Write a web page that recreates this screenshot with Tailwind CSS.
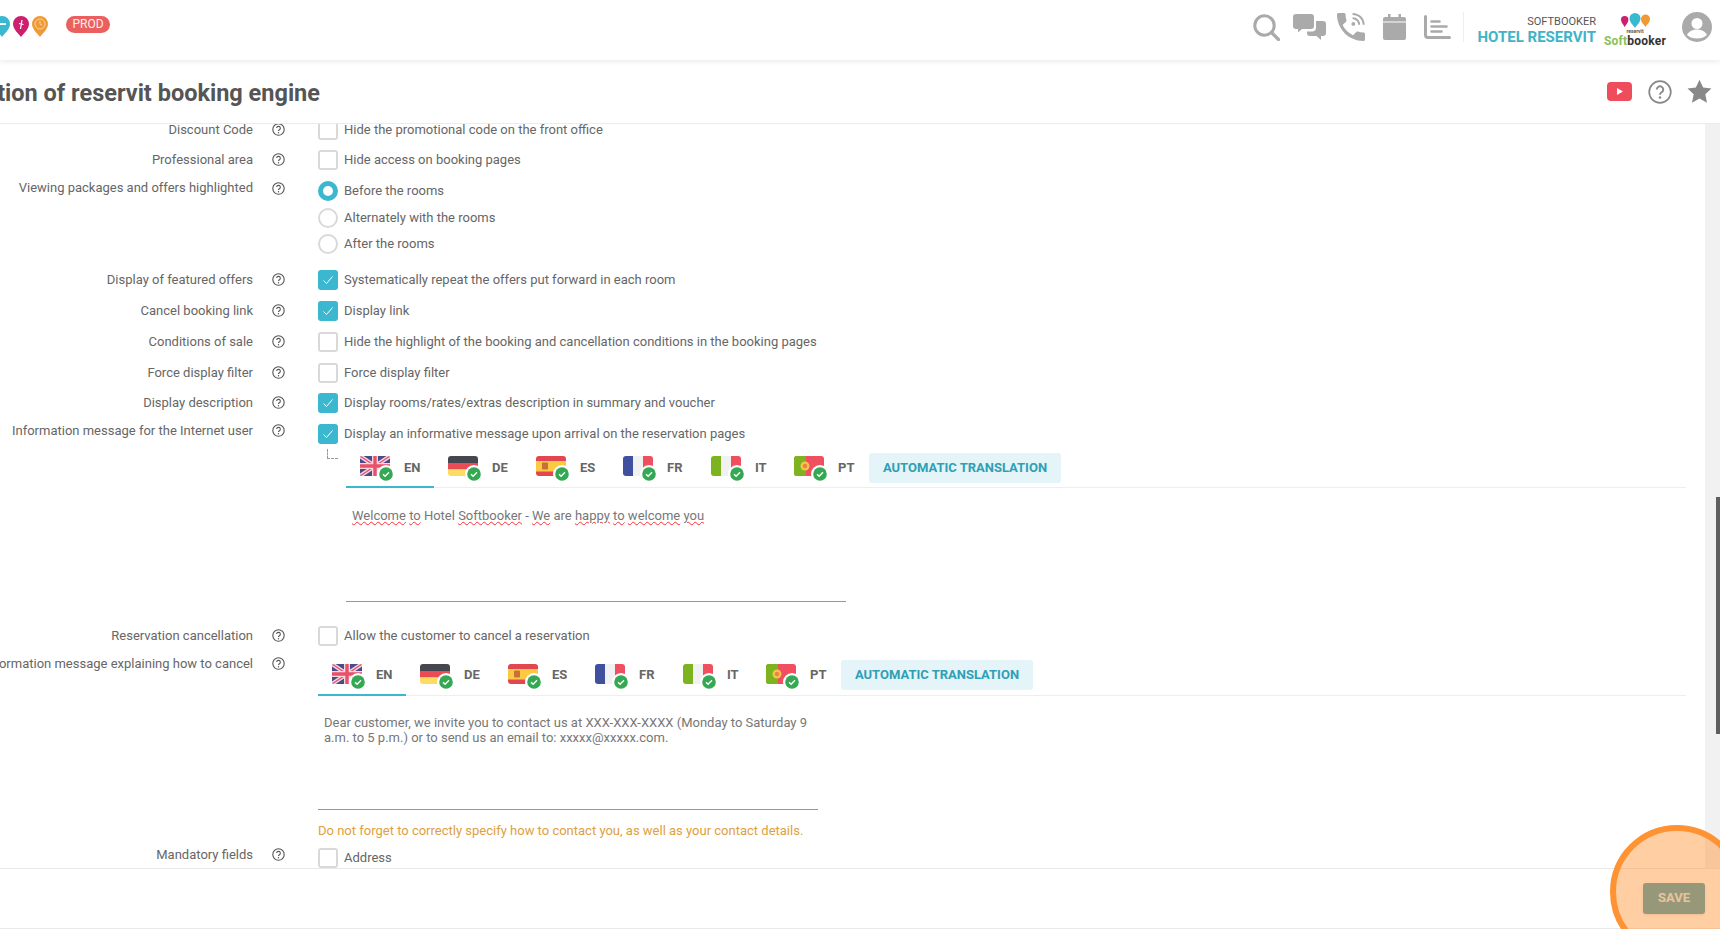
<!DOCTYPE html>
<html lang="en">
<head>
    <meta charset="UTF-8">
    <title>Configuration of reservit booking engine</title>
    <script src="https://cdn.jsdelivr.net/npm/@tailwindcss/browser@4"></script>
</head>
<body class="relative h-[929px] overflow-hidden bg-white font-['Roboto',sans-serif] text-[13px] text-[#666]">
    <!-- Shared icons -->
    <svg class="hidden">
        <symbol id="help" viewBox="0 0 13 13">
            <circle cx="6.5" cy="6.5" r="5.7" fill="none" stroke="#555" stroke-width="1.1"/>
            <path d="M4.7 5.1a1.8 1.8 0 1 1 2.7 1.6c-.6.35-.9.7-.9 1.3" fill="none" stroke="#555" stroke-width="1.1"/>
            <circle cx="6.5" cy="9.7" r=".7" fill="#555"/>
        </symbol>
        <symbol id="tick" viewBox="0 0 20 20">
            <path d="M5.5 10.5l3 3 6-7" fill="none" stroke="#fff" stroke-width="1"/>
        </symbol>
        <symbol id="badge" viewBox="0 0 18 18">
            <circle cx="9" cy="9" r="9" fill="#fff"/>
            <circle cx="9" cy="9" r="6.8" fill="#35a853"/>
            <path d="M6 9.2l2.1 2 3.9-4" fill="none" stroke="#fff" stroke-width="1.4"/>
        </symbol>
        <symbol id="flag-en" viewBox="0 0 30 20">
            <rect width="30" height="20" fill="#4a4a8c"/>
            <path d="M0 0l30 20M30 0L0 20" stroke="#f3d9de" stroke-width="4"/>
            <path d="M0 0l30 20M30 0L0 20" stroke="#e9506a" stroke-width="1.3"/>
            <path d="M15 0v20M0 10h30" stroke="#f3d9de" stroke-width="6"/>
            <path d="M15 0v20M0 10h30" stroke="#e9506a" stroke-width="3.4"/>
        </symbol>
        <symbol id="flag-de" viewBox="0 0 30 20">
            <rect width="30" height="7" fill="#464650"/>
            <rect y="7" width="30" height="6.5" fill="#ea4c55"/>
            <rect y="13.5" width="30" height="6.5" fill="#fddc62"/>
        </symbol>
        <symbol id="flag-es" viewBox="0 0 30 20">
            <rect width="30" height="20" fill="#e2474f"/>
            <rect y="5" width="30" height="10.5" fill="#fcc943"/>
            <rect x="6" y="6.5" width="6" height="7" rx="1" fill="#c9703a"/>
        </symbol>
        <symbol id="flag-fr" viewBox="0 0 30 20">
            <rect width="10" height="20" fill="#40509e"/>
            <rect x="10" width="10" height="20" fill="#f1f1f1"/>
            <rect x="20" width="10" height="20" fill="#ef4f5f"/>
        </symbol>
        <symbol id="flag-it" viewBox="0 0 30 20">
            <rect width="10" height="20" fill="#7db31e"/>
            <rect x="10" width="10" height="20" fill="#f1f1f1"/>
            <rect x="20" width="10" height="20" fill="#ef4f5f"/>
        </symbol>
        <symbol id="flag-pt" viewBox="0 0 30 20">
            <rect width="30" height="20" fill="#ef4f5f"/>
            <rect width="12" height="20" fill="#7db31e"/>
            <circle cx="11" cy="10" r="4.5" fill="#f4c44d"/>
            <circle cx="11" cy="10" r="2.2" fill="#e8843f"/>
        </symbol>
    </svg>

    <!-- Top bar -->
    <header class="relative z-10 flex h-[60px] items-center justify-between bg-white shadow-[0_1px_6px_rgba(0,0,0,0.1)]">
        <div class="flex items-center">
            <div class="-ml-[6px] flex gap-[3px] pb-[7px]">
                <svg class="h-[21px] w-[16px]" viewBox="0 0 16 21"><path d="M8 21C5 17 0 13 0 8a8 8 0 0 1 16 0c0 5-5 9-8 13z" fill="#39b8cf"/><path d="M4 8h8" stroke="#fff" stroke-width="2"/></svg>
                <svg class="h-[21px] w-[16px]" viewBox="0 0 16 21"><path d="M8 21C5 17 0 13 0 8a8 8 0 0 1 16 0c0 5-5 9-8 13z" fill="#cc1f6e"/><path d="M9 4L7.5 13M6 7.5l4.5 1" stroke="#fff" stroke-width="1.2" fill="none"/></svg>
                <svg class="h-[21px] w-[16px]" viewBox="0 0 16 21"><path d="M8 21C5 17 0 13 0 8a8 8 0 0 1 16 0c0 5-5 9-8 13z" fill="#f09a37"/><circle cx="8" cy="8" r="5" fill="none" stroke="#fbd9a8" stroke-width=".9"/><path d="M8 5v3.2l2.2 1" fill="none" stroke="#fbd9a8" stroke-width=".9"/></svg>
            </div>
            <span class="mb-[12px] ml-[18px] flex h-[17px] w-[44px] items-center justify-center rounded-full bg-[#e9605f] text-[12px] text-white/90">PROD</span>
        </div>
        <div class="flex items-center pb-[6px]">
            <svg class="h-[27px] w-[27px]" viewBox="0 0 27 27"><circle cx="11.5" cy="11.5" r="9.7" fill="none" stroke="#aaa" stroke-width="3"/><path d="M18.5 18.5l7 7" stroke="#aaa" stroke-width="3.2" stroke-linecap="round"/></svg>
            <svg class="ml-[13px] h-[27px] w-[33px]" viewBox="0 0 33 27" fill="#aaa"><path d="M3 0h15a3 3 0 0 1 3 3v9a3 3 0 0 1-3 3H9l-4 3.5V15H3a3 3 0 0 1-3-3V3a3 3 0 0 1 3-3z"/><path d="M23 7h7a3 3 0 0 1 3 3v9a3 3 0 0 1-3 3h-2v4l-4.500-4H17a3 3 0 0 1-3-3v-1.500h5a4 4 0 0 0 4-4V7z"/></svg>
            <svg class="ml-[11px] h-[28px] w-[28px]" viewBox="3 3 18 18" fill="#aaa"><path d="M20 15.500c-1.250 0-2.450-.2-3.570-.57-.35-.11-.74-.03-1.020.24l-2.200 2.200c-2.830-1.440-5.150-3.750-6.590-6.590l2.200-2.210c.28-.26.36-.65.25-1C8.700 6.450 8.500 5.250 8.500 4c0-.55-.45-1-1-1H4c-.55 0-1 .45-1 1 0 9.390 7.610 17 17 17 .55 0 1-.45 1-1v-3.500c0-.55-.45-1-1-1z"/><path d="M19.500 10.500h1.300c0-4.300-3.500-7.500-7.800-7.500v1.300c3.600 0 6.500 2.600 6.500 6.200zm-2.900 0h1.300c0-2.700-2.200-4.800-4.900-4.800V7c2 0 3.600 1.500 3.600 3.500z"/><circle cx="13.500" cy="10" r="1.200"/></svg>
            <svg class="ml-[18px] h-[26px] w-[23px]" viewBox="0 0 23 26" fill="#aaa"><path d="M2 3h3V0h2.500v3h8V0H18v3h3a2 2 0 0 1 2 2v2.500H0V5a2 2 0 0 1 2-2z"/><path d="M0 8.500h23V24a2 2 0 0 1-2 2H2a2 2 0 0 1-2-2z"/></svg>
            <svg class="ml-[18px] h-[24px] w-[27px]" viewBox="0 0 27 24" fill="none" stroke="#aaa" stroke-linecap="round"><path d="M1.500 1.500V20a2.500 2.500 0 0 0 2.500 2.500h21.500" stroke-width="3"/><path d="M7.500 6.500h8M7.500 11.500h15M7.500 16.500h10" stroke-width="2.600"/></svg>
            <div class="ml-[12px] h-[30px] w-px bg-[#eee]"></div>
            <div class="ml-[13px] mt-[7px] flex w-[119px] flex-col items-end whitespace-nowrap leading-none">
                <span class="text-[11px] text-[#555]">SOFTBOOKER</span>
                <span class="mt-[3px] text-[15px] font-bold text-[#40b4c6]">HOTEL RESERVIT</span>
            </div>
            <div class="ml-[9px] mt-[5px] flex w-[60px] flex-col items-center">
                <svg class="h-[15px] w-[29px]" viewBox="0 0 29 15">
                    <path d="M3.700 14C2.500 11.500 0 9.500 0 6.700a3.700 3.700 0 0 1 7.400 0C7.400 9.500 5 11.500 3.700 14z" fill="#cc1f6e"/>
                    <path d="M14 15C12 12 8.500 9 8.500 5.500a5.500 5.500 0 0 1 11 0C19.500 9 16 12 14 15z" fill="#39b8cf"/>
                    <path d="M24.500 14c-1.500-2.500-4.500-4.500-4.500-8a4.500 4.500 0 0 1 9 0c0 3.500-3 5.500-4.500 8z" fill="#f09a37"/>
                </svg>
                <span class="text-[5px] font-bold leading-[7px] text-[#555]">reservit</span>
                <span class="text-[12px] font-bold leading-[12px] tracking-[0.2px] text-[#333]"><span class="text-[#8cc152]">Soft</span>booker</span>
            </div>
            <svg class="ml-[17px] mr-[8px] h-[30px] w-[30px]" viewBox="0 0 30 30"><circle cx="15" cy="15" r="15" fill="#aaa"/><circle cx="15" cy="11.500" r="5.500" fill="#fff"/><path d="M5 23c2-4 6-5.500 10-5.500S23 19 25 23c-2.500 2.500-6 3.500-10 3.500S7.500 25.500 5 23z" fill="#fff"/></svg>
        </div>
    </header>

    <!-- Title bar -->
    <div class="relative z-[5] flex h-[64px] items-center justify-between border-b border-[#ececec] bg-white">
        <div class="mt-[4px] flex w-[320px] justify-end whitespace-nowrap text-[23.500px] font-bold text-[#555]">Configuration of reservit booking engine</div>
        <div class="flex items-center">
            <svg class="h-[19px] w-[25px]" viewBox="0 0 25 19"><rect width="25" height="19" rx="4" fill="#ef4c5c"/><path d="M10 6v7l6-3.500z" fill="#fff"/></svg>
            <svg class="ml-[16px] h-[24px] w-[24px]" viewBox="0 0 24 24"><circle cx="12" cy="12" r="10.800" fill="none" stroke="#888" stroke-width="1.700"/><path d="M8.800 9.500a3.200 3.200 0 1 1 4.800 2.800c-1 .6-1.600 1.200-1.600 2.400" fill="none" stroke="#888" stroke-width="1.900"/><circle cx="12" cy="17.500" r="1.200" fill="#888"/></svg>
            <svg class="ml-[15px] mr-[8px] h-[25px] w-[25px]" viewBox="0 0 24 24"><path d="M12 .8l3.500 7.400 8 1-5.900 5.500 1.600 8L12 18.700l-7.200 4 1.600-8L.5 9.200l8-1z" fill="#888"/></svg>
        </div>
    </div>

    <!-- Settings form -->
    <main class="flex h-[744px] overflow-hidden">
        <div class="-mt-[8px] flex-1">
            <div class="flex h-[30px]">
                <div class="mt-1 flex h-5 w-[285px] items-center justify-end whitespace-nowrap">Discount Code<svg class="mb-[2px] ml-[19px] h-[13px] w-[13px] shrink-0"><use href="#help"/></svg></div>
                <label class="ml-[33px] mt-1 flex items-center gap-1.5 self-start"><span class="h-5 w-5 rounded-[3px] border-2 border-[#d9d9d9]"></span>Hide the promotional code on the front office</label>
            </div>
            <div class="flex h-[30px]">
                <div class="mt-1 flex h-5 w-[285px] items-center justify-end whitespace-nowrap">Professional area<svg class="mb-[2px] ml-[19px] h-[13px] w-[13px] shrink-0"><use href="#help"/></svg></div>
                <label class="ml-[33px] mt-1 flex items-center gap-1.5 self-start"><span class="h-5 w-5 rounded-[3px] border-2 border-[#d9d9d9]"></span>Hide access on booking pages</label>
            </div>
            <div class="flex h-[90px]">
                <div class="mt-[2px] flex h-5 w-[285px] items-center justify-end whitespace-nowrap">Viewing packages and offers highlighted<svg class="ml-[19px] h-[13px] w-[13px] shrink-0"><use href="#help"/></svg></div>
                <div class="ml-[33px] mt-[5px] flex flex-col gap-[6.500px]">
                    <label class="flex items-center gap-1.5"><span class="h-5 w-5 rounded-full border-[5px] border-[#3bb8cf]"></span>Before the rooms</label>
                    <label class="flex items-center gap-1.5"><span class="h-5 w-5 rounded-full border-2 border-[#d9d9d9]"></span>Alternately with the rooms</label>
                    <label class="flex items-center gap-1.5"><span class="h-5 w-5 rounded-full border-2 border-[#d9d9d9]"></span>After the rooms</label>
                </div>
            </div>
            <div class="flex h-[31px]">
                <div class="mt-1 flex h-5 w-[285px] items-center justify-end whitespace-nowrap">Display of featured offers<svg class="mb-[2px] ml-[19px] h-[13px] w-[13px] shrink-0"><use href="#help"/></svg></div>
                <label class="ml-[33px] mt-1 flex items-center gap-1.5 self-start"><span class="h-5 w-5 rounded-[3px] bg-[#3bb8cf]"><svg class="h-5 w-5"><use href="#tick"/></svg></span>Systematically repeat the offers put forward in each room</label>
            </div>
            <div class="flex h-[31px]">
                <div class="mt-1 flex h-5 w-[285px] items-center justify-end whitespace-nowrap">Cancel booking link<svg class="mb-[2px] ml-[19px] h-[13px] w-[13px] shrink-0"><use href="#help"/></svg></div>
                <label class="ml-[33px] mt-1 flex items-center gap-1.5 self-start"><span class="h-5 w-5 rounded-[3px] bg-[#3bb8cf]"><svg class="h-5 w-5"><use href="#tick"/></svg></span>Display link</label>
            </div>
            <div class="flex h-[31px]">
                <div class="mt-1 flex h-5 w-[285px] items-center justify-end whitespace-nowrap">Conditions of sale<svg class="mb-[2px] ml-[19px] h-[13px] w-[13px] shrink-0"><use href="#help"/></svg></div>
                <label class="ml-[33px] mt-1 flex items-center gap-1.5 self-start"><span class="h-5 w-5 rounded-[3px] border-2 border-[#d9d9d9]"></span>Hide the highlight of the booking and cancellation conditions in the booking pages</label>
            </div>
            <div class="flex h-[30px]">
                <div class="mt-1 flex h-5 w-[285px] items-center justify-end whitespace-nowrap">Force display filter<svg class="mb-[2px] ml-[19px] h-[13px] w-[13px] shrink-0"><use href="#help"/></svg></div>
                <label class="ml-[33px] mt-1 flex items-center gap-1.5 self-start"><span class="h-5 w-5 rounded-[3px] border-2 border-[#d9d9d9]"></span>Force display filter</label>
            </div>
            <div class="flex h-[30px]">
                <div class="mt-1 flex h-5 w-[285px] items-center justify-end whitespace-nowrap">Display description<svg class="mb-[2px] ml-[19px] h-[13px] w-[13px] shrink-0"><use href="#help"/></svg></div>
                <label class="ml-[33px] mt-1 flex items-center gap-1.5 self-start"><span class="h-5 w-5 rounded-[3px] bg-[#3bb8cf]"><svg class="h-5 w-5"><use href="#tick"/></svg></span>Display rooms/rates/extras description in summary and voucher</label>
            </div>

            <!-- Information message -->
            <div class="flex h-[203px]">
                <div class="mt-[2px] flex h-5 w-[285px] items-center justify-end whitespace-nowrap">Information message for the Internet user<svg class="mb-[2px] ml-[19px] h-[13px] w-[13px] shrink-0"><use href="#help"/></svg></div>
                <div class="relative ml-[33px] mt-[5px] flex-1">
                    <label class="flex items-center gap-1.5"><span class="h-5 w-5 rounded-[3px] bg-[#3bb8cf]"><svg class="h-5 w-5"><use href="#tick"/></svg></span>Display an informative message upon arrival on the reservation pages</label>
                    <div class="absolute left-[9px] top-[25px] h-[10px] w-[11px] border-b border-l border-dashed border-[#999]"></div>
                    <div class="ml-[28px] mt-[5px]">
                        <div class="flex h-[39px] w-[1340px] border-b border-[#eee] font-bold">
                            <div class="flex h-[39px] w-[88px] gap-[14px] border-b-2 border-[#3bb8cf] pl-[14px] pt-[7px]"><span class="relative h-5 w-[30px]"><svg class="h-5 w-[30px] rounded-[2px]"><use href="#flag-en"/></svg><svg class="absolute -right-[5px] top-[9px] h-[18px] w-[18px]"><use href="#badge"/></svg></span><span class="mt-[2px] leading-5">EN</span></div>
                            <div class="flex w-[88px] gap-[14px] pl-[14px] pt-[7px]"><span class="relative h-5 w-[30px]"><svg class="h-5 w-[30px] rounded-[3px]"><use href="#flag-de"/></svg><svg class="absolute -right-[5px] top-[9px] h-[18px] w-[18px]"><use href="#badge"/></svg></span><span class="mt-[2px] leading-5">DE</span></div>
                            <div class="flex w-[87px] gap-[14px] pl-[14px] pt-[7px]"><span class="relative h-5 w-[30px]"><svg class="h-5 w-[30px] rounded-[3px]"><use href="#flag-es"/></svg><svg class="absolute -right-[5px] top-[9px] h-[18px] w-[18px]"><use href="#badge"/></svg></span><span class="mt-[2px] leading-5">ES</span></div>
                            <div class="flex w-[88px] gap-[14px] pl-[14px] pt-[7px]"><span class="relative h-5 w-[30px]"><svg class="h-5 w-[30px] rounded-[3px]"><use href="#flag-fr"/></svg><svg class="absolute -right-[5px] top-[9px] h-[18px] w-[18px]"><use href="#badge"/></svg></span><span class="mt-[2px] leading-5">FR</span></div>
                            <div class="flex w-[83px] gap-[14px] pl-[14px] pt-[7px]"><span class="relative h-5 w-[30px]"><svg class="h-5 w-[30px] rounded-[3px]"><use href="#flag-it"/></svg><svg class="absolute -right-[5px] top-[9px] h-[18px] w-[18px]"><use href="#badge"/></svg></span><span class="mt-[2px] leading-5">IT</span></div>
                            <div class="flex w-[89px] gap-[14px] pl-[14px] pt-[7px]"><span class="relative h-5 w-[30px]"><svg class="h-5 w-[30px] rounded-[3px]"><use href="#flag-pt"/></svg><svg class="absolute -right-[5px] top-[9px] h-[18px] w-[18px]"><use href="#badge"/></svg></span><span class="mt-[2px] leading-5">PT</span></div>
                            <button class="mt-[4px] h-[30px] w-[192px] rounded-[3px] bg-[#e5f4f8] text-[#2f9fb5]">AUTOMATIC TRANSLATION</button>
                        </div>
                        <div class="h-[114px] w-[500px] border-b border-[#999] pl-[6px] pt-5 leading-4 text-[#777]"><span class="underline decoration-red-500 decoration-wavy decoration-1">Welcome</span> <span class="underline decoration-red-500 decoration-wavy decoration-1">to</span> Hotel <span class="underline decoration-red-500 decoration-wavy decoration-1">Softbooker</span> - <span class="underline decoration-red-500 decoration-wavy decoration-1">We</span> are <span class="underline decoration-red-500 decoration-wavy decoration-1">happy</span> <span class="underline decoration-red-500 decoration-wavy decoration-1">to</span> <span class="underline decoration-red-500 decoration-wavy decoration-1">welcome</span> <span class="underline decoration-red-500 decoration-wavy decoration-1">you</span></div>
                    </div>
                </div>
            </div>

            <div class="flex h-[31px]">
                <div class="mt-1 flex h-5 w-[285px] items-center justify-end whitespace-nowrap">Reservation cancellation<svg class="mb-[2px] ml-[19px] h-[13px] w-[13px] shrink-0"><use href="#help"/></svg></div>
                <label class="ml-[33px] mt-1 flex items-center gap-1.5 self-start"><span class="h-5 w-5 rounded-[3px] border-2 border-[#d9d9d9]"></span>Allow the customer to cancel a reservation</label>
            </div>

            <!-- Cancellation message -->
            <div class="flex h-[191px]">
                <div class="mt-px flex h-5 w-[285px] items-center justify-end whitespace-nowrap">Information message explaining how to cancel<svg class="mb-[2px] ml-[19px] h-[13px] w-[13px] shrink-0"><use href="#help"/></svg></div>
                <div class="ml-[33px] mt-1 flex-1">
                    <div class="flex h-[39px] w-[1368px] border-b border-[#eee] font-bold">
                        <div class="flex h-[39px] w-[88px] gap-[14px] border-b-2 border-[#3bb8cf] pl-[14px] pt-[7px]"><span class="relative h-5 w-[30px]"><svg class="h-5 w-[30px] rounded-[2px]"><use href="#flag-en"/></svg><svg class="absolute -right-[5px] top-[9px] h-[18px] w-[18px]"><use href="#badge"/></svg></span><span class="mt-px leading-5">EN</span></div>
                        <div class="flex w-[88px] gap-[14px] pl-[14px] pt-[7px]"><span class="relative h-5 w-[30px]"><svg class="h-5 w-[30px] rounded-[3px]"><use href="#flag-de"/></svg><svg class="absolute -right-[5px] top-[9px] h-[18px] w-[18px]"><use href="#badge"/></svg></span><span class="mt-px leading-5">DE</span></div>
                        <div class="flex w-[87px] gap-[14px] pl-[14px] pt-[7px]"><span class="relative h-5 w-[30px]"><svg class="h-5 w-[30px] rounded-[3px]"><use href="#flag-es"/></svg><svg class="absolute -right-[5px] top-[9px] h-[18px] w-[18px]"><use href="#badge"/></svg></span><span class="mt-px leading-5">ES</span></div>
                        <div class="flex w-[88px] gap-[14px] pl-[14px] pt-[7px]"><span class="relative h-5 w-[30px]"><svg class="h-5 w-[30px] rounded-[3px]"><use href="#flag-fr"/></svg><svg class="absolute -right-[5px] top-[9px] h-[18px] w-[18px]"><use href="#badge"/></svg></span><span class="mt-px leading-5">FR</span></div>
                        <div class="flex w-[83px] gap-[14px] pl-[14px] pt-[7px]"><span class="relative h-5 w-[30px]"><svg class="h-5 w-[30px] rounded-[3px]"><use href="#flag-it"/></svg><svg class="absolute -right-[5px] top-[9px] h-[18px] w-[18px]"><use href="#badge"/></svg></span><span class="mt-px leading-5">IT</span></div>
                        <div class="flex w-[89px] gap-[14px] pl-[14px] pt-[7px]"><span class="relative h-5 w-[30px]"><svg class="h-5 w-[30px] rounded-[3px]"><use href="#flag-pt"/></svg><svg class="absolute -right-[5px] top-[9px] h-[18px] w-[18px]"><use href="#badge"/></svg></span><span class="mt-px leading-5">PT</span></div>
                        <button class="mt-[3px] h-[30px] w-[192px] rounded-[3px] bg-[#e5f4f8] text-[#2f9fb5]">AUTOMATIC TRANSLATION</button>
                    </div>
                    <div class="h-[114px] w-[500px] border-b border-[#999] pl-[6px] pt-5 leading-[14.500px] text-[#777]">Dear customer, we invite you to contact us at XXX-XXX-XXXX (Monday to Saturday 9<br>a.m. to 5 p.m.) or to send us an email to: xxxxx@xxxxx.com.</div>
                    <p class="mt-[13px] leading-4 text-[#e0a040]">Do not forget to correctly specify how to contact you, as well as your contact details.</p>
                </div>
            </div>

            <div class="flex h-[32px]">
                <div class="mt-px flex h-5 w-[285px] items-center justify-end whitespace-nowrap">Mandatory fields<svg class="mb-[2px] ml-[19px] h-[13px] w-[13px] shrink-0"><use href="#help"/></svg></div>
                <label class="ml-[33px] mt-1 flex items-center gap-1.5 self-start"><span class="h-5 w-5 rounded-[3px] border-2 border-[#d9d9d9]"></span>Address</label>
            </div>
        </div>
        <!-- Scrollbar -->
        <div class="w-[15px] bg-[#f1f1f1]">
            <div class="ml-[11px] mt-[373px] h-[237px] w-1 bg-[#5e5e5e]"></div>
        </div>
    </main>

    <!-- Footer -->
    <footer class="flex h-[61px] justify-end border-y border-[#e8e8e8] bg-white pr-[15px] pt-[14px]">
        <button class="h-[31px] w-[62px] rounded-[3px] bg-[#439cb4] pb-[2px] text-[13px] font-bold text-white/80 shadow-sm">SAVE</button>
    </footer>

    <!-- Tutorial highlight over the save button -->
    <div class="absolute left-[1610px] top-[825px] h-[134px] w-[134px] rounded-full border-[6px] border-[#ff9233] bg-[#ff9233]/45"></div>
</body>
</html>
